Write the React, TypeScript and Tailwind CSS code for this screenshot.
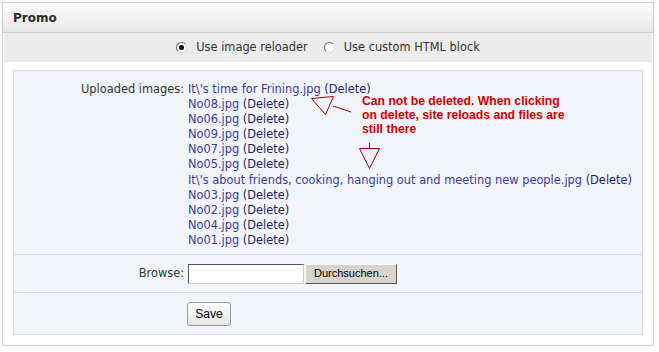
import React from 'react';

const FILES: { name: string }[] = [
  { name: "It\\'s time for Frining.jpg" },
  { name: 'No08.jpg' },
  { name: 'No06.jpg' },
  { name: 'No09.jpg' },
  { name: 'No07.jpg' },
  { name: 'No05.jpg' },
  { name: "It\\'s about friends, cooking, hanging out and meeting new people.jpg" },
  { name: 'No03.jpg' },
  { name: 'No02.jpg' },
  { name: 'No04.jpg' },
  { name: 'No01.jpg' },
];

function Radio({ checked }: { checked?: boolean }) {
  return (
    <span className="relative inline-flex w-[11px] h-[11px] rounded-full bg-white border border-t-[#666] border-l-[#666] border-r-[#ddd] border-b-[#ddd] items-center justify-center">
      {checked && <span className="w-[5px] h-[5px] rounded-full bg-black" />}
    </span>
  );
}

export default function App() {
  return (
    <div className="relative w-[659px] h-[352px] bg-white font-['DejaVu_Sans',sans-serif] text-[11.4px] text-[#333]">
      <div className="absolute left-[2px] top-[2px] w-[652px] h-[344px] border border-[#cfcfcf] flex flex-col">
        <div className="h-[30px] flex items-center px-[10px] bg-gradient-to-b from-[#fbfbfb] to-[#e9e9e9] border-b border-[#cfcfcf]">
          <span className="font-bold text-[12px] text-[#2a2a2a] font-['DejaVu_Sans',sans-serif]">Promo</span>
        </div>
        <div className="h-[29px] mx-[1px] bg-[#ececec] flex items-center justify-center text-[#333]">
          <Radio checked />
          <span className="ml-[9px] mr-[16px]">Use image reloader</span>
          <Radio />
          <span className="ml-[9px]">Use custom HTML block</span>
        </div>
        <div className="mt-[8px] ml-[10px] w-[630px] border border-[#d9dde2] bg-[#f2f5f9] flex flex-col">
          <div className="grid grid-cols-[170px_1fr] gap-x-[4px] pt-[11px] pb-[6px] border-b border-[#d9dde2] leading-[15.1px]">
            <div className="text-right text-[#333]">Uploaded images:</div>
            <div className="flex flex-col">
              {FILES.map((f) => (
                <div key={f.name} className="whitespace-nowrap">
                  <span className="text-[#3a3a9c]">{f.name}</span>{' '}
                  <span className="text-[#1f1f66]">(Delete)</span>
                </div>
              ))}
            </div>
          </div>
          <div className="grid grid-cols-[170px_1fr] gap-x-[4px] h-[38px] items-center border-b border-[#d9dde2]">
            <div className="text-right text-[#333]">Browse:</div>
            <div className="flex items-center">
              <span className="w-[116px] h-[20px] bg-white border border-t-[#555] border-l-[#555] border-r-[#ccc] border-b-[#ccc]" />
              <span className="ml-[1px] w-[92px] h-[20px] bg-[#d8d4cc] border border-t-white border-l-white border-r-[#555] border-b-[#555] flex items-center justify-center font-['Liberation_Sans',sans-serif] text-[11px] text-black">
                Durchsuchen...
              </span>
            </div>
          </div>
          <div className="grid grid-cols-[170px_1fr] gap-x-[3px] h-[41px] items-center">
            <div />
            <div>
              <span className="inline-flex w-[44px] h-[24px] items-center justify-center rounded-[3px] border border-[#9a9a9a] bg-gradient-to-b from-white to-[#e6e6e6] font-['Liberation_Sans',sans-serif] text-[12px] text-black">
                Save
              </span>
            </div>
          </div>
        </div>
      </div>

      <div className="absolute left-[362px] top-[94px] w-[212px] font-['Liberation_Sans',sans-serif] font-bold text-[12.2px] leading-[14px] text-[#d40000]">
        Can not be deleted. When clicking on delete, site reloads and files are still there
      </div>
      <svg className="absolute left-0 top-0" width="659" height="352" viewBox="0 0 659 352">
        <g fill="none" stroke="#a00000" strokeWidth="1">
          <polygon points="311.5,98.5 333.5,96.5 325.5,114.5" />
          <line x1="333" y1="106" x2="351" y2="112" />
          <line x1="369.5" y1="143" x2="369.5" y2="148.5" />
          <polygon points="359.5,148.5 379.5,148.5 369.5,168.5" />
        </g>
      </svg>
    </div>
  );
}
